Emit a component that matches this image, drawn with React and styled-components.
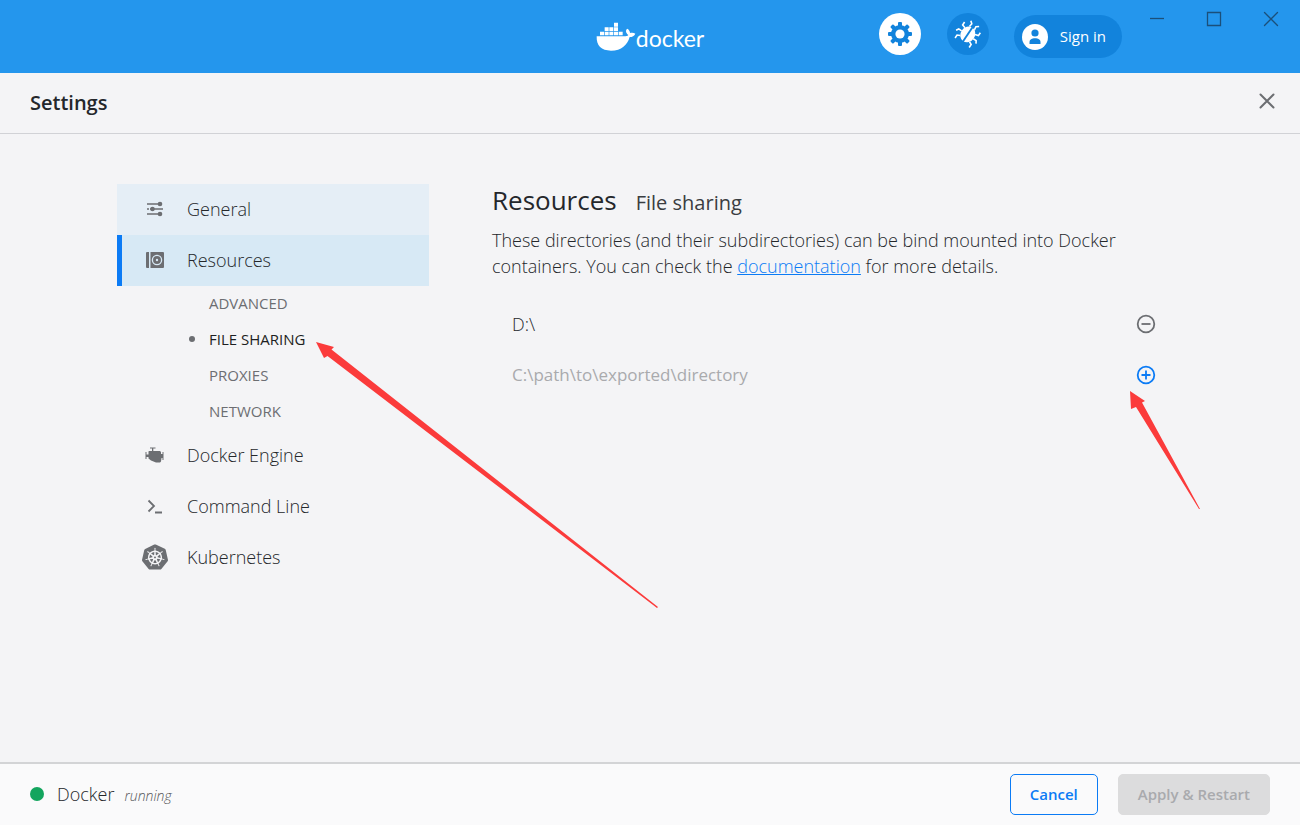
import React from "react";
import { useState } from "react";
import styled, { createGlobalStyle, css } from "styled-components";

// react-icons
import { SiKubernetes } from "react-icons/si";

const colors = {
  blue: "#2496ed",
  darkBlue: "#1283dc",
  accent: "#0b7bf5",
  bg: "#f4f4f6",
  text: "#24272b",
  grey: "#6c6e72",
};

const subMenus = ["Advanced", "File sharing", "Proxies", "Network"];

const WhaleIcon = () => (
  <svg width="40" height="30" viewBox="46 34 120 90" fill="#fff" aria-hidden="true">
    <path d="M48 77H130C136 77 141 76 143 73C135 66 134 58 140 54C145 57 148 62 148 67C154 65 160 66 164 69C161 76 155 79 147 79C140 103 123 120 91 120C62 120 47 106 48 77Z" />
    <path d="M100 36h12v12h-12zM72 50h12v11h-12zM86 50h12v11h-12zM100 50h12v11h-12zM58 63h12v11h-12zM72 63h12v11h-12zM86 63h12v11h-12zM100 63h12v11h-12zM114 63h12v11h-12z" />
  </svg>
);

const GearIcon = () => (
  <svg width="24" height="24" viewBox="0 0 24 24" aria-hidden="true">
    <g fill={colors.darkBlue}>
      {[0, 45, 90, 135].map((angle) => (
        <rect key={angle} x="10" y="0" width="4" height="24" rx="1" transform={`rotate(${angle} 12 12)`} />
      ))}
      <circle cx="12" cy="12" r="9" />
    </g>
    <circle cx="12" cy="12" r="4.6" fill="#fff" />
  </svg>
);

const BugIcon = () => (
  <svg width="28" height="28" viewBox="0 0 28 28" aria-hidden="true">
    <g transform="rotate(34 14 14)">
      <ellipse cx="14" cy="14.5" rx="7.2" ry="8.2" fill="#fff" />
      <path
        d="M11 7L11.500 3.500L9 1.500M17 7L16.500 3.500L19 1.500M8 10.500L4.500 9.500V6M20 10.500l3.500-1V6M7 15H3.500L2 17.500M21 15h3.500L26 17.500M8.500 19.500L5.500 21v3.500M19.500 19.500L22.500 21v3.500"
        fill="none"
        stroke="#fff"
        strokeWidth="1.600"
      />
      <path d="M14 5V24" stroke={colors.darkBlue} strokeWidth="1.900" />
    </g>
  </svg>
);

const UserIcon = () => (
  <svg width="26" height="26" viewBox="0 0 26 26" aria-hidden="true">
    <circle cx="13" cy="13" r="13" fill="#fff" />
    <circle cx="13" cy="9" r="3.600" fill={colors.darkBlue} />
    <path d="M7.500 20v-2c0-2.600 2.500-3.800 5.500-3.800s5.500 1.200 5.500 3.800v2z" fill={colors.darkBlue} />
  </svg>
);

const GeneralIcon = () => (
  <svg width="18" height="16" viewBox="0 0 18 16" fill={colors.grey} aria-hidden="true">
    <path d="M1 3h15M1 8h2M4 8h13M1 13h15" stroke={colors.grey} strokeWidth="1.500" />
    <circle cx="14" cy="3" r="2.300" />
    <circle cx="6.500" cy="8" r="2.300" />
    <circle cx="14" cy="13" r="2.300" />
  </svg>
);

const ResourcesIcon = () => (
  <svg width="18" height="16" viewBox="0 0 18 16" aria-hidden="true">
    <path d="M1 0h2v16H1a1 1 0 0 1-1-1V1a1 1 0 0 1 1-1zM4.500 0H17a1 1 0 0 1 1 1v14a1 1 0 0 1-1 1H4.500z" fill={colors.grey} />
    <circle cx="11" cy="8" r="4.600" fill="none" stroke="#d7e9f5" strokeWidth="1.300" />
    <circle cx="11" cy="8" r="1.200" fill="#d7e9f5" />
  </svg>
);

const EngineIcon = () => (
  <svg width="20" height="16" viewBox="0 0 20 16" fill={colors.grey} aria-hidden="true">
    <path d="M5 0.500h5.500v1H8.300V4H15l1 1v2h1.500V5h1v8h-1v-2H16.500l-.500 3.500-1 1h-4L6 13.500 3.500 11.500V10H1.500v2h-1V5h1v2.500h2V4.500L4 4h3V1.500H5z" />
  </svg>
);

const CommandIcon = () => (
  <svg width="16" height="16" viewBox="0 0 16 16" fill="none" stroke={colors.grey} strokeWidth="1.800" aria-hidden="true">
    <path d="M1.500 2.500L7 8l-5.500 5.500M8 14.500h7" />
  </svg>
);

const CloseIcon = ({ strokeWidth = 1.3 }) => (
  <svg width="16" height="16" viewBox="0 0 16 16" fill="none" stroke="currentColor" strokeWidth={strokeWidth} aria-hidden="true">
    <path d="M1.500 1.500l13 13M14.500 1.500l-13 13" strokeLinecap="round" />
  </svg>
);

const CircleIcon = ({ plus }) => (
  <svg width="20" height="20" viewBox="0 0 20 20" fill="none" stroke="currentColor" strokeWidth="1.800" aria-hidden="true">
    <circle cx="10" cy="10" r="8.300" />
    <path d={plus ? "M5.500 10h9M10 5.500v9" : "M5.500 10h9"} />
  </svg>
);

const App = () => {
  const [path, setPath] = useState("");

  return (
    <Page>
      <GlobalStyle />
      <Header>
        <Logo href="#">
          <WhaleIcon />
          <span>docker</span>
        </Logo>
        <HeaderRight>
          <RoundButtons>
            <RoundButton $active aria-label="Settings">
              <GearIcon />
            </RoundButton>
            <RoundButton aria-label="Troubleshoot">
              <BugIcon />
            </RoundButton>
          </RoundButtons>
          <SignInButton>
            <UserIcon />
            <span>Sign in</span>
          </SignInButton>
          <WindowControls>
            <WindowButton aria-label="Minimize">
              <svg width="16" height="16" viewBox="0 0 16 16" stroke="currentColor" strokeWidth="1.3" aria-hidden="true">
                <path d="M1 7.500h14" />
              </svg>
            </WindowButton>
            <WindowButton aria-label="Maximize">
              <svg width="16" height="16" viewBox="0 0 16 16" fill="none" stroke="currentColor" strokeWidth="1.3" aria-hidden="true">
                <path d="M1.500 1.500h13v13h-13z" />
              </svg>
            </WindowButton>
            <WindowButton aria-label="Close window">
              <CloseIcon />
            </WindowButton>
          </WindowControls>
        </HeaderRight>
      </Header>

      <TitleBar>
        <h1>Settings</h1>
        <CloseButton aria-label="Close settings">
          <CloseIcon strokeWidth={2} />
        </CloseButton>
      </TitleBar>

      <Main>
        <Nav>
          <NavItem href="#general" $hover>
            <IconBox>
              <GeneralIcon />
            </IconBox>
            General
          </NavItem>
          <NavItem href="#resources" $active>
            <IconBox>
              <ResourcesIcon />
            </IconBox>
            Resources
          </NavItem>
          <SubList>
            {subMenus.map((menu) => (
              <li key={menu}>
                <SubItem href="#resources" $active={menu === "File sharing"}>
                  {menu}
                </SubItem>
              </li>
            ))}
          </SubList>
          <NavItem href="#engine">
            <IconBox>
              <EngineIcon />
            </IconBox>
            Docker Engine
          </NavItem>
          <NavItem href="#cli">
            <IconBox>
              <CommandIcon />
            </IconBox>
            Command Line
          </NavItem>
          <NavItem href="#kubernetes">
            <IconBox>
              <SiKubernetes size={26} />
            </IconBox>
            Kubernetes
          </NavItem>
        </Nav>

        <Contents>
          <Heading>
            <h2>Resources</h2>
            <h3>File sharing</h3>
          </Heading>
          <Description>
            These directories (and their subdirectories) can be bind mounted into Docker containers. You can check
            the <a href="#docs">documentation</a> for more details.
          </Description>
          <PathRow>
            <span>D:\</span>
            <PathButton aria-label="Remove directory">
              <CircleIcon />
            </PathButton>
          </PathRow>
          <PathRow>
            <PathInput
              aria-label="Directory"
              placeholder="C:\path\to\exported\directory"
              value={path}
              onChange={(e) => setPath(e.target.value)}
            />
            <PathButton $add aria-label="Add directory">
              <CircleIcon plus />
            </PathButton>
          </PathRow>
        </Contents>
      </Main>

      <Footer>
        <Status>
          <StatusDot />
          Docker
          <em>running</em>
        </Status>
        <FooterButton>Cancel</FooterButton>
        <FooterButton disabled>Apply &amp; Restart</FooterButton>
      </Footer>

      <MenuArrow width="344" height="268" viewBox="0 0 344 268" aria-hidden="true">
        <path d="M0 0L18 5L15.500 7.500L342 265L341 266L11.500 14L8 16Z" />
      </MenuArrow>
      <AddArrow width="72" height="120" viewBox="0 0 72 120" aria-hidden="true">
        <path d="M0 0L15 10L12 11.500L70 118L69 118L6 16L1 18Z" />
      </AddArrow>
    </Page>
  );
};

const GlobalStyle = createGlobalStyle`
  * {
    box-sizing: border-box;
  }

  body {
    margin: 0;
    background: ${colors.bg};
    color: ${colors.text};
    font-family: "Open Sans", "Noto Sans", sans-serif;
    font-size: 18px;
    font-weight: 300;
  }

  h1, h2, h3, p, ul {
    margin: 0;
    padding: 0;
    font-weight: inherit;
  }

  button, input {
    font-family: inherit;
    font-weight: inherit;
    padding: 0;
    border: none;
    background: none;
  }

  a {
    color: inherit;
    text-decoration: none;
  }

  svg {
    flex-shrink: 0;
  }
`;

const Page = styled.div`
  position: relative;
  display: flex;
  flex-direction: column;
  min-height: 100vh;
`;

// header

const Header = styled.header`
  display: grid;
  grid-template-columns: 1fr auto 1fr;
  align-items: center;
  height: 73px;
  background: ${colors.blue};
`;

const Logo = styled.a`
  grid-column: 2;
  display: flex;
  align-items: center;
  color: #fff;

  & > span {
    padding-top: 2px;
    font-family: Lato, sans-serif;
    font-size: 23px;
    font-weight: 400;
    line-height: 30px;
  }
`;

const HeaderRight = styled.div`
  display: flex;
  justify-content: flex-end;
  align-items: center;
  height: 100%;
`;

const RoundButtons = styled.div`
  display: flex;
  gap: 26px;
  margin-right: 25px;
  padding-bottom: 5px;
`;

const RoundButton = styled.button`
  display: flex;
  justify-content: center;
  align-items: center;
  width: 42px;
  height: 42px;
  border-radius: 50%;
  background: ${({ $active }) => ($active ? "#fff" : colors.darkBlue)};
`;

const SignInButton = styled.button`
  display: flex;
  align-items: center;
  gap: 12px;
  height: 43px;
  padding: 0 16px 0 8px;
  border-radius: 999px;
  background: ${colors.darkBlue};
  color: #fff;
  font-size: 15px;
  font-weight: 500;
  white-space: nowrap;

  & > span {
    padding-bottom: 2px;
  }
`;

const WindowControls = styled.div`
  display: flex;
  align-self: flex-start;
  margin: 0 1px 0 6px;
`;

const WindowButton = styled.button`
  display: flex;
  justify-content: center;
  align-items: center;
  width: 57px;
  height: 38px;
  color: #1b4f7a;
`;

// title

const TitleBar = styled.div`
  display: flex;
  justify-content: space-between;
  align-items: center;
  height: 61px;
  padding: 0 25px 2px 30px;
  border-bottom: 1px solid #d1d2d6;

  & > h1 {
    font-size: 20px;
    font-weight: 600;
  }
`;

const CloseButton = styled.button`
  display: flex;
  padding-bottom: 3px;
  color: ${colors.grey};
`;

const Main = styled.main`
  flex: 1;
  display: flex;
  align-items: flex-start;
  gap: 63px;
  padding: 50px 9%;
`;

// nav

const Nav = styled.nav`
  flex: 0 0 312px;
`;

const NavItem = styled.a`
  display: flex;
  align-items: center;
  height: 51px;
  padding-bottom: 2px;
  border-left: 5px solid transparent;

  ${({ $hover }) =>
    $hover &&
    css`
      border-color: #e5eef6;
      background: #e5eef6;
    `}
  ${({ $active }) =>
    $active &&
    css`
      border-color: ${colors.accent};
      background: #d7e9f5;
    `}
`;

const IconBox = styled.span`
  display: flex;
  justify-content: center;
  width: 65px;
  color: ${colors.grey};
`;

const SubList = styled.ul`
  list-style: none;
`;

const SubItem = styled.a`
  display: flex;
  align-items: center;
  height: 36px;
  padding: 0 0 2px 72px;
  color: ${({ $active }) => ($active ? "#1d1f22" : colors.grey)};
  font-size: 15px;
  font-weight: 400;
  text-transform: uppercase;

  &::before {
    content: "";
    width: 6px;
    height: 6px;
    margin-right: 14px;
    border-radius: 50%;
    background: ${({ $active }) => ($active ? colors.grey : "transparent")};
  }
`;

// contents

const Contents = styled.section`
  flex: 1;
  min-width: 0;
`;

const Heading = styled.div`
  display: flex;
  align-items: baseline;
  gap: 19px;
  font-weight: 400;

  & > h2 {
    font-size: 26px;
    line-height: 32px;
  }

  & > h3 {
    font-size: 20px;
    color: #3a3d41;
  }
`;

const Description = styled.p`
  margin: 11px 0 19px;
  line-height: 26px;

  & > a {
    color: ${colors.accent};
    text-decoration: underline;
  }
`;

const PathRow = styled.div`
  display: flex;
  justify-content: space-between;
  align-items: center;
  height: 51px;
  padding: 0 27px 0 20px;
`;

const PathInput = styled.input`
  flex: 1;
  font-size: 17px;
  font-weight: 400;
  color: ${colors.text};

  &::placeholder {
    color: #a9aaad;
    opacity: 1;
  }
`;

const PathButton = styled.button`
  display: flex;
  color: ${({ $add }) => ($add ? colors.accent : colors.grey)};
`;

// footer

const Footer = styled.footer`
  display: flex;
  align-items: center;
  gap: 20px;
  height: 63px;
  padding: 0 30px;
  border-top: 2px solid #d3d4d6;
  background: #fafafb;
`;

const Status = styled.div`
  display: flex;
  align-items: baseline;
  margin-right: auto;
  padding-bottom: 2px;

  & > em {
    margin-left: 10px;
    font-size: 14px;
    color: #55575a;
  }
`;

const StatusDot = styled.span`
  width: 14px;
  height: 14px;
  margin-right: 13px;
  border-radius: 50%;
  background: #13a55e;
`;

const FooterButton = styled.button`
  height: 41px;
  padding: 0 19px 2px;
  border: 1px solid ${colors.accent};
  border-radius: 5px;
  color: ${colors.accent};
  font-size: 15px;
  font-weight: 600;

  &:disabled {
    border-color: #dcdcdd;
    background: #dcdcdd;
    color: #a9aaad;
  }
`;

// arrows over the page

const arrow = css`
  position: absolute;
  fill: #fb3b3b;
  pointer-events: none;
`;

const MenuArrow = styled.svg`
  ${arrow}
  top: 342px;
  left: 316px;
`;

const AddArrow = styled.svg`
  ${arrow}
  top: 391px;
  left: 1130px;
`;

export default App;
